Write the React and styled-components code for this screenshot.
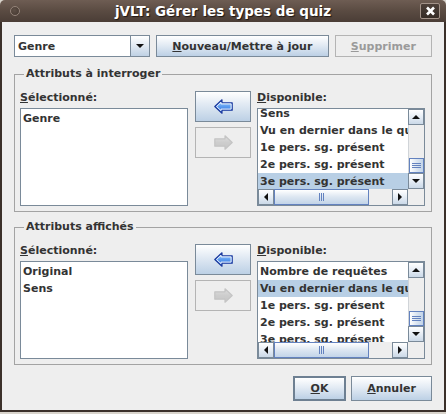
import React from "react";
import styled, { createGlobalStyle } from "styled-components";

const GlobalStyle = createGlobalStyle`
  html, body {
    margin: 0;
    padding: 0;
    background: #d9d4cc;
  }
  body {
    font-family: "DejaVu Sans", "Liberation Sans", sans-serif;
  }
`;

const FONT = `"DejaVu Sans", "Liberation Sans", sans-serif`;

function App() {
  return (
    <>
      <GlobalStyle />
      <Window>
        <TitleBar>
          <TitleLeft>
            <MenuDot />
          </TitleLeft>
          <Title>jVLT: Gérer les types de quiz</Title>
          <TitleRight>
            <CloseButton>
              <svg width="11" height="10" viewBox="0 0 11 10">
                <path d="M2 1.5 L9 8.5 M9 1.5 L2 8.5" stroke="#fff" strokeWidth="2.6" />
              </svg>
            </CloseButton>
          </TitleRight>
        </TitleBar>

        <Body>
          <TopRow>
            <Combo>
              <ComboField>Genre</ComboField>
              <ComboArrow>
                <Triangle dir="down" />
              </ComboArrow>
            </Combo>
            <Button width={174}>
              <u>N</u>ouveau/Mettre à jour
            </Button>
            <Button width={98} disabled>
              <u>S</u>upprimer
            </Button>
          </TopRow>

          <AttributeGroup
            title="Attributs à interroger"
            selected={["Genre"]}
            available={[
              "Sens",
              "Vu en dernier dans le quiz",
              "1e pers. sg. présent",
              "2e pers. sg. présent",
              "3e pers. sg. présent",
            ]}
            highlight={4}
            offset={-4}
          />

          <AttributeGroup
            title="Attributs affichés"
            selected={["Original", "Sens"]}
            available={[
              "Nombre de requêtes",
              "Vu en dernier dans le quiz",
              "1e pers. sg. présent",
              "2e pers. sg. présent",
              "3e pers. sg. présent",
            ]}
            highlight={1}
            offset={1}
            second
          />

          <BottomRow>
            <Button width={53} isDefault>
              <u>O</u>K
            </Button>
            <Button width={81}>
              <u>A</u>nnuler
            </Button>
          </BottomRow>
        </Body>
      </Window>
    </>
  );
}

function AttributeGroup({ title, selected, available, highlight, offset, second }) {
  return (
    <Group second={second}>
      <Legend>{title}</Legend>
      <GroupInner>
        <Column>
          <Label>
            <u>S</u>électionné:
          </Label>
          <ListBox>
            {selected.map((s) => (
              <Row key={s}>{s}</Row>
            ))}
          </ListBox>
        </Column>

        <TransferButtons>
          <TransferButton>
            <ArrowIcon />
          </TransferButton>
          <TransferButton disabled>
            <ArrowIcon right disabled />
          </TransferButton>
        </TransferButtons>

        <Column>
          <Label>
            <u>D</u>isponible:
          </Label>
          <ScrollPane>
            <Viewport>
              <Rows style={{ marginTop: offset }}>
                {available.map((s, i) => (
                  <Row key={s} selected={i === highlight}>
                    {s}
                  </Row>
                ))}
              </Rows>
            </Viewport>
            <VScroll>
              <ScrollBtn>
                <Triangle dir="up" />
              </ScrollBtn>
              <VTrack>
                <VThumb>
                  <Grip vertical />
                </VThumb>
              </VTrack>
              <ScrollBtn>
                <Triangle dir="down" />
              </ScrollBtn>
            </VScroll>
            <HScroll>
              <ScrollBtn>
                <Triangle dir="left" />
              </ScrollBtn>
              <HTrack>
                <HThumb>
                  <Grip />
                </HThumb>
              </HTrack>
              <ScrollBtn>
                <Triangle dir="right" />
              </ScrollBtn>
            </HScroll>
            <Corner />
          </ScrollPane>
        </Column>
      </GroupInner>
    </Group>
  );
}

function ArrowIcon({ right, disabled }) {
  const id = right ? "gr" : "gl";
  return (
    <svg
      width="19"
      height="15"
      viewBox="0 0 19 15"
      style={{ transform: right ? "scaleX(-1)" : "none" }}
    >
      <defs>
        <linearGradient id={id} x1="0" y1="0" x2="0" y2="1">
          <stop offset="0" stopColor={disabled ? "#dedede" : "#b4d6fc"} />
          <stop offset="0.5" stopColor={disabled ? "#cdcdcd" : "#5b9cf0"} />
          <stop offset="1" stopColor={disabled ? "#c6c6c6" : "#2b68d8"} />
        </linearGradient>
      </defs>
      <path
        d="M0.8 7.5 L8 0.8 L8 3.8 L18.2 3.8 L18.2 11.2 L8 11.2 L8 14.2 Z"
        fill={`url(#${id})`}
        stroke={disabled ? "#c4c4c4" : "#1c3a9e"}
        strokeWidth="1.2"
        strokeLinejoin="round"
      />
      {!disabled && (
        <path
          d="M2.6 7.5 L7 3.4 L7 4.9 L17.1 4.9 L17.1 10.1 L7 10.1 L7 11.6 Z"
          fill="none"
          stroke="#ffffff"
          strokeOpacity="0.9"
          strokeWidth="1"
          strokeLinejoin="round"
        />
      )}
    </svg>
  );
}

const Window = styled.div`
  width: 446px;
  height: 412px;
  display: flex;
  flex-direction: column;
`;

const TitleBar = styled.div`
  height: 22px;
  flex-shrink: 0;
  display: grid;
  grid-template-columns: 1fr auto 1fr;
  align-items: center;
  background: linear-gradient(#6e5d53, #5a4b42 50%, #4a3d36);
  border-radius: 5px 5px 0 0;
`;

const TitleLeft = styled.div`
  display: flex;
  padding-left: 10px;
`;

const TitleRight = styled.div`
  display: flex;
  justify-content: flex-end;
  padding-right: 6px;
`;

const MenuDot = styled.div`
  width: 8px;
  height: 8px;
  border-radius: 50%;
  border: 1px solid #948379;
  background: radial-gradient(circle at 40% 40%, #5e4f46, #43372f);
`;

const Title = styled.div`
  font-family: ${FONT};
  font-weight: bold;
  font-size: 13.5px;
  color: #ffffff;
  text-shadow: 1px 1px 1px #1e1612;
  white-space: nowrap;
`;

const CloseButton = styled.div`
  width: 18px;
  height: 14px;
  display: flex;
  align-items: center;
  justify-content: center;
  border: 1px solid #a39389;
  border-radius: 2px;
  background: linear-gradient(#4c3f38, #362c26);
`;

const Body = styled.div`
  flex: 1;
  display: flex;
  flex-direction: column;
  background: #eeeeee;
  border-left: 2px solid #3b302a;
  border-right: 2px solid #3b302a;
  border-bottom: 2px solid #3b302a;
  padding: 13px 12px 0 12px;
  font-family: ${FONT};
  font-weight: bold;
  font-size: 11px;
  color: #333333;
`;

const TopRow = styled.div`
  display: flex;
  gap: 6px;
  height: 22px;
`;

const Combo = styled.div`
  display: flex;
  width: 137px;
`;

const ComboField = styled.div`
  flex: 1;
  background: #ffffff;
  border: 1px solid #7a8a99;
  padding-left: 3px;
  display: flex;
  align-items: center;
`;

const ComboArrow = styled.div`
  width: 18px;
  display: flex;
  align-items: center;
  justify-content: center;
  border: 1px solid #7a8a99;
  border-left: none;
  background: linear-gradient(#ffffff, #dde6f0 55%, #bfd1e4);
`;

const Triangle = styled.span`
  width: 0;
  height: 0;
  border-style: solid;
  ${({ dir }) =>
    dir === "down"
      ? "border-width: 4px 4px 0 4px; border-color: #111 transparent transparent transparent;"
      : dir === "up"
      ? "border-width: 0 4px 4px 4px; border-color: transparent transparent #111 transparent;"
      : dir === "left"
      ? "border-width: 4px 4px 4px 0; border-color: transparent #111 transparent transparent;"
      : "border-width: 4px 0 4px 4px; border-color: transparent transparent transparent #111;"}
`;

const Button = styled.div`
  width: ${({ width }) => width}px;
  box-sizing: border-box;
  display: flex;
  align-items: center;
  justify-content: center;
  white-space: nowrap;
  border: ${({ isDefault, disabled }) =>
    isDefault ? "2px solid #6e8092" : disabled ? "1px solid #b4b4b4" : "1px solid #7a8a99"};
  background: ${({ disabled }) =>
    disabled ? "#eeeeee" : "linear-gradient(#ffffff, #e3ebf4 45%, #bcd0e5)"};
  color: ${({ disabled }) => (disabled ? "#9a9a9a" : "#333333")};
`;

const Group = styled.fieldset`
  margin: ${({ second }) => (second ? "8px 0 0 0" : "10px 0 0 0")};
  padding: 10px 6px 5px 5px;
  border: 1px solid #a3a3a3;
  min-inline-size: 0;
`;

const Legend = styled.legend`
  padding: 0 2px;
  margin-left: 4px;
  line-height: 14px;
  font-size: 11px;
`;

const GroupInner = styled.div`
  display: flex;
  align-items: flex-start;
`;

const Column = styled.div`
  width: 168px;
  display: flex;
  flex-direction: column;
  gap: 3px;
`;

const Label = styled.div`
  height: 14px;
  line-height: 14px;
`;

const ListBox = styled.div`
  height: 98px;
  box-sizing: border-box;
  background: #ffffff;
  border: 1px solid #7a8a99;
  padding-top: 1px;
`;

const Row = styled.div`
  height: 17px;
  line-height: 17px;
  padding-left: 2px;
  white-space: nowrap;
  background: ${({ selected }) => (selected ? "#b8cfe5" : "transparent")};
`;

const TransferButtons = styled.div`
  width: 56px;
  margin: 0 6px 0 7px;
  display: flex;
  flex-direction: column;
  gap: 5px;
`;

const TransferButton = styled.div`
  height: 31px;
  box-sizing: border-box;
  display: flex;
  align-items: center;
  justify-content: center;
  border: 1px solid ${({ disabled }) => (disabled ? "#b4b4b4" : "#7a8a99")};
  background: ${({ disabled }) =>
    disabled ? "#eeeeee" : "linear-gradient(#ffffff, #e3ebf4 40%, #bcd0e5)"};
`;

const ScrollPane = styled.div`
  height: 98px;
  box-sizing: border-box;
  border: 1px solid #7a8a99;
  display: grid;
  grid-template-columns: 1fr 16px;
  grid-template-rows: 1fr 16px;
  background: #ffffff;
`;

const Viewport = styled.div`
  overflow: hidden;
  background: #ffffff;
`;

const Rows = styled.div`
  display: flex;
  flex-direction: column;
`;

const VScroll = styled.div`
  display: flex;
  flex-direction: column;
  background: #eeeeee;
`;

const HScroll = styled.div`
  display: flex;
  background: #eeeeee;
`;

const ScrollBtn = styled.div`
  width: 16px;
  height: 16px;
  flex-shrink: 0;
  box-sizing: border-box;
  display: flex;
  align-items: center;
  justify-content: center;
  border: 1px solid #7a8a99;
  background: linear-gradient(#ffffff, #e6edf5 50%, #cbd9e8);
`;

const VTrack = styled.div`
  flex: 1;
  display: flex;
  flex-direction: column;
  justify-content: flex-end;
  background: #eeeeee;
  border-left: 1px solid #d0d4d8;
`;

const VThumb = styled.div`
  height: 15px;
  box-sizing: border-box;
  border: 1px solid #6382bf;
  background: linear-gradient(90deg, #ffffff, #dce6f1 50%, #c2d4e8);
  display: flex;
  align-items: center;
  justify-content: center;
`;

const HTrack = styled.div`
  flex: 1;
  display: flex;
  background: #eeeeee;
`;

const HThumb = styled.div`
  width: 95px;
  box-sizing: border-box;
  border: 1px solid #6382bf;
  background: linear-gradient(#ffffff, #dce6f1 50%, #c2d4e8);
  display: flex;
  align-items: center;
  justify-content: center;
`;

const Grip = styled.span`
  ${({ vertical }) =>
    vertical
      ? `width: 9px; height: 5px;
         background: repeating-linear-gradient(#6382bf 0 1px, transparent 1px 2px);`
      : `width: 5px; height: 8px;
         background: repeating-linear-gradient(90deg, #6382bf 0 1px, transparent 1px 2px);`}
`;

const Corner = styled.div`
  background: #eeeeee;
`;

const BottomRow = styled.div`
  display: flex;
  justify-content: flex-end;
  gap: 5px;
  height: 25px;
  margin-top: 11px;
`;

export default App;
